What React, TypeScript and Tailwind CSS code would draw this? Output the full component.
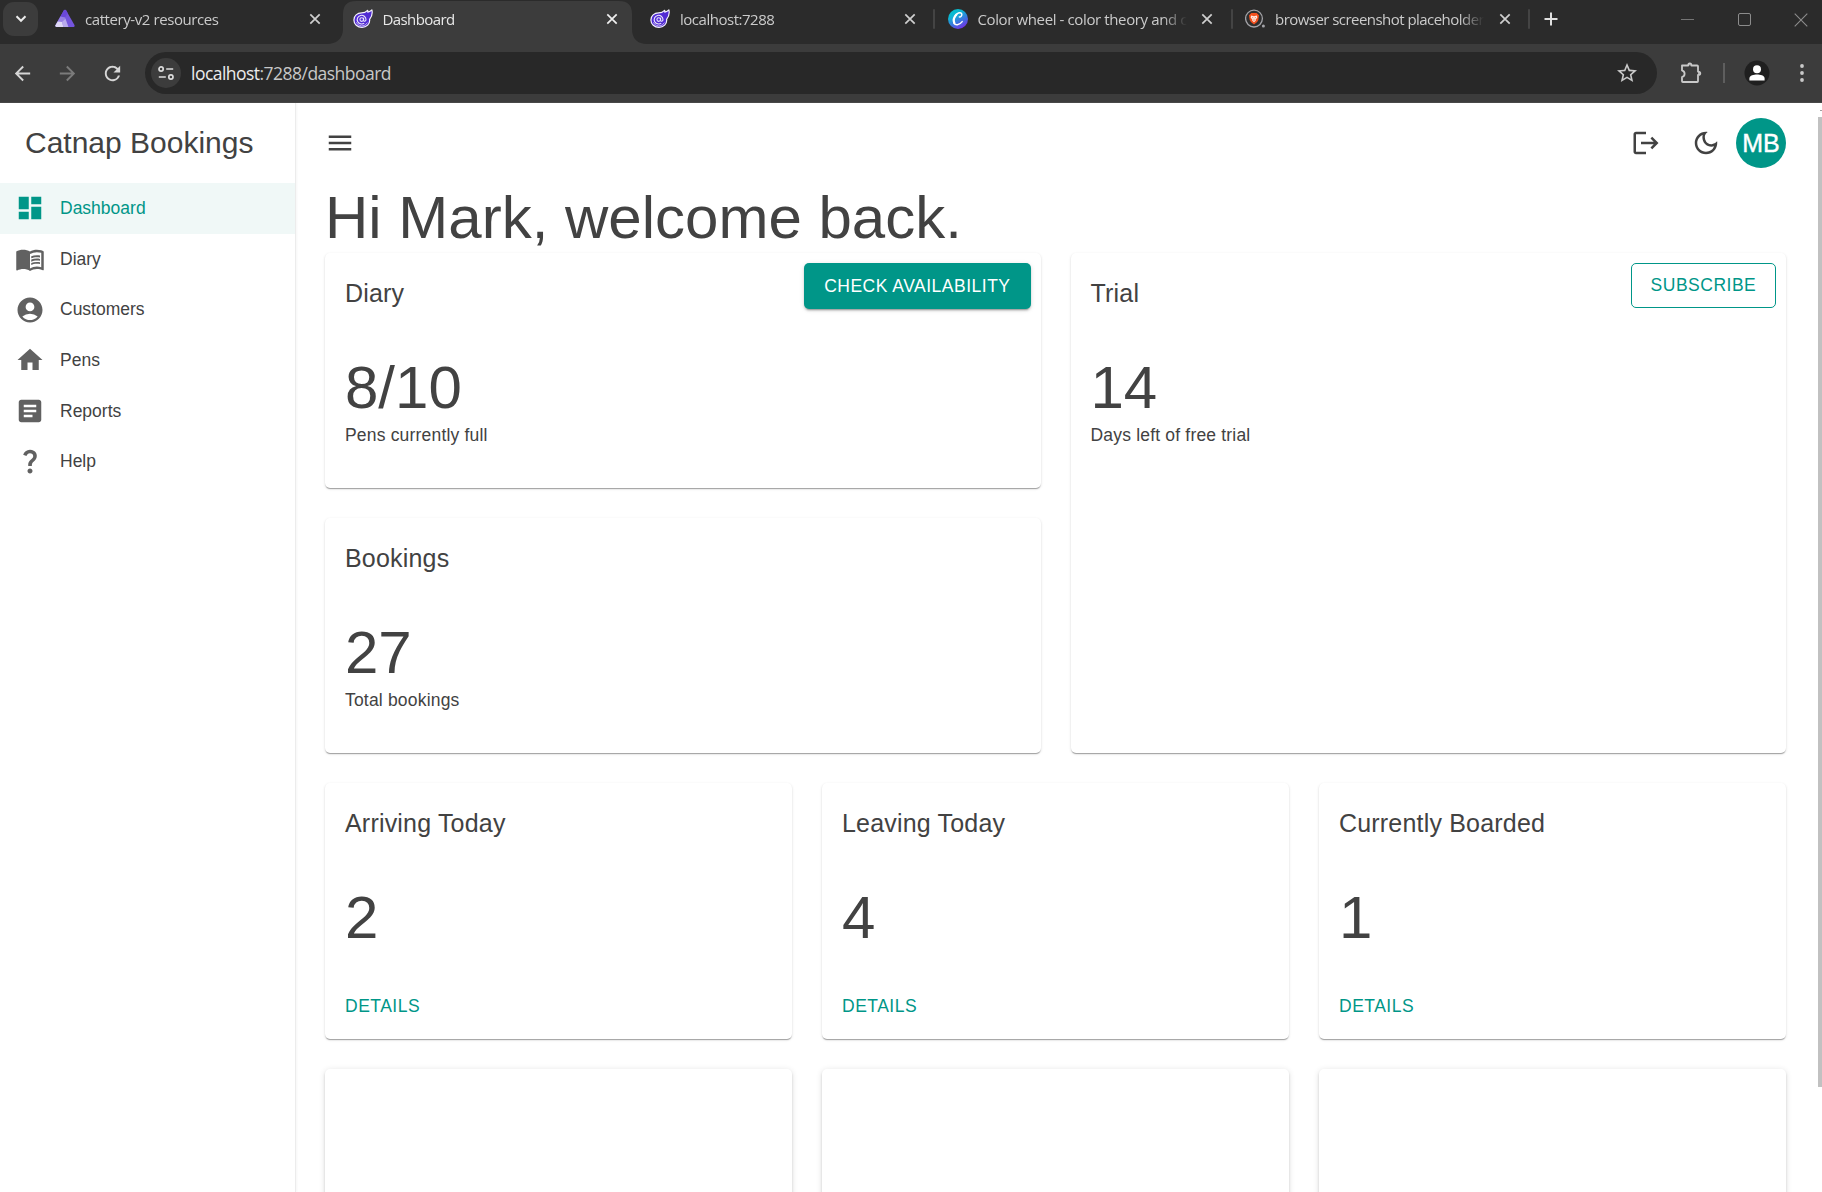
import type { ReactNode } from "react";
import {
  MdAccountCircle,
  MdArrowBack,
  MdArrowForward,
  MdArticle,
  MdDashboard,
  MdHome,
  MdLogout,
  MdMenu,
  MdMenuBook,
  MdOutlineDarkMode,
  MdQuestionMark,
  MdRefresh,
  MdStarBorder,
} from "react-icons/md";

function AspireIcon() {
  return (
    <svg width="20" height="20" viewBox="0 0 20 20">
      <path d="M10 .8 Q10.8 .8 11.2 1.5 L19.6 16.2 Q20 18 18.6 18 H1.4 Q0 18 .4 16.2 L8.8 1.5 Q9.2 .8 10 .8Z" fill="#7455dd" />
      <path d="M10 .8 Q9.2 .8 8.8 1.5 L5.4 7.6 L10.2 8.4 L12.6 4 L11.2 1.5 Q10.8 .8 10 .8Z" fill="#6a48da" />
      <path d="M5.4 7.6 L2.6 12.4 L8.4 18 H13.4 L10.2 8.4Z" fill="#9780e5" />
      <path d="M2.6 12.4 L.4 16.2 Q0 18 1.4 18 H8.4 L7 13Z" fill="#dfd8f7" />
      <path d="M7 13 L10.4 10 L13.4 18 H8.4Z" fill="#b9aaee" />
    </svg>
  );
}

function BlazorIcon() {
  return (
    <svg width="20" height="20" viewBox="0 0 20 20">
      <path
        d="M8.6 3.9 C11.4 3.8 13.2 2.9 14.6 1.3 C14.9 2 14.9 2.5 14.8 3.1 C16.6 2.6 18 1.7 18.9 .8 C19.7 4.6 18.9 7.8 16.6 10.4 C17.2 14.9 13.4 18.4 9 18.4 C4.4 18.4 .9 15.3 .9 11 C.9 6.8 4.2 4 8.6 3.9Z"
        fill="#512bd4"
        stroke="#f4f1fd"
        strokeWidth="1.2"
        strokeLinejoin="round"
      />
      <circle cx="8.7" cy="10.6" r="1.8" fill="none" stroke="#ece7fb" strokeWidth="1.1" />
      <path d="M10.6 8.7 V11.2 C10.7 12.9 13 12.6 13 10.5 A4.4 4.3 0 1 0 11.2 14.1" fill="none" stroke="#ece7fb" strokeWidth="1.1" />
      <path d="M14.4 13.6 A6.2 6.2 0 0 1 3.2 13.2" fill="none" stroke="#cfc4f4" strokeWidth=".8" />
    </svg>
  );
}

function CanvaIcon() {
  return (
    <svg width="20" height="20" viewBox="0 0 20 20">
      <defs>
        <linearGradient id="canva" x1=".2" y1="0" x2=".75" y2="1">
          <stop offset="0" stopColor="#00c4cc" />
          <stop offset=".3" stopColor="#0fb4d4" />
          <stop offset=".65" stopColor="#3f6fe0" />
          <stop offset="1" stopColor="#7d2ae8" />
        </linearGradient>
      </defs>
      <circle cx="10" cy="10" r="10" fill="url(#canva)" />
      <path
        d="M11.3 7.9 C12.6 8.3 14.2 6.6 13.8 5 C13.4 3.4 11 3.2 9 4.9 C6.2 7.2 4.9 11.6 6 14 C7.2 16.6 11.2 16.5 14.2 12.6"
        fill="none"
        stroke="#fff"
        strokeWidth="1.4"
        strokeLinecap="round"
      />
      <path d="M8.4 5.6 C6 8.2 5.2 11.8 6.4 14.2" fill="none" stroke="#fff" strokeWidth="2.2" strokeLinecap="round" />
    </svg>
  );
}

function BraveIcon() {
  return (
    <svg width="20" height="20" viewBox="0 0 20 20">
      <circle cx="9" cy="9.6" r="8.4" fill="#2e2e2e" stroke="#a3a3a8" strokeWidth="1.3" />
      <path d="M6.4 4 H11.6 L14 6.2 L13.3 11 Q12.7 13.4 9 15.4 Q5.3 13.4 4.7 11 L4 6.2Z" fill="#f4501e" />
      <path d="M6.2 6.6 L9 7.2 L11.8 6.6 L12.4 8.4 L10.6 10.8 L10.9 11.6 L9 13.2 L7.1 11.6 L7.4 10.8 L5.6 8.4Z" fill="#fff" fillOpacity=".88" />
      <path d="M7 8.4 L8.4 9 M11 8.4 L9.6 9 M8 10.8 L9 11.3 L10 10.8" fill="none" stroke="#f4501e" strokeWidth=".6" />
      <circle cx="18.4" cy="17" r="1.5" fill="#a3a3a8" />
    </svg>
  );
}

function CloseGlyph({ bright }: { bright?: boolean }) {
  return (
    <svg width="12" height="12" viewBox="0 0 12 12" className={bright ? "text-[#f0f0f0]" : "text-[#cfcfcf]"}>
      <path d="M1.3 1.3 L10.7 10.7 M10.7 1.3 L1.3 10.7" stroke="currentColor" strokeWidth="1.7" />
    </svg>
  );
}

type TabProps = { icon: ReactNode; title: string; titleClass: string; active?: boolean; divider?: boolean };

function Tab({ icon, title, titleClass, active, divider }: TabProps) {
  return (
    <div className="relative flex h-[44px] w-[297.5px] shrink-0">
      {active && (
        <div className="absolute top-[1px] left-[-15.5px] h-[43px] w-[320px]">
          <svg width="320" height="43" viewBox="0 0 320 43">
            <path d="M0 43 C9 43 16 38 16 28 V13 Q16 0 29 0 H292 Q305 0 305 13 V28 C305 38 311 43 320 43Z" fill="#3c3c3c" />
          </svg>
        </div>
      )}
      <div className="relative flex h-[38px] w-full items-center pl-[10px]">
        <span className="w-[20px] shrink-0">{icon}</span>
        <span
          className={`ml-[10px] w-[209px] shrink-0 overflow-hidden text-[15px] leading-[22px] whitespace-nowrap [mask-image:linear-gradient(to_right,black_185px,transparent_209px)] ${titleClass} ${active ? "text-[#e8e8e8]" : "text-[#cbcbcb]"}`}
        >
          {title}
        </span>
        <span className="ml-[14.5px]">
          <CloseGlyph bright={active} />
        </span>
      </div>
      {divider && <span className="absolute top-[9px] right-[2.5px] h-[20px] w-[2px] rounded bg-[#444444]" />}
    </div>
  );
}

function BrowserChrome() {
  return (
    <header className="h-[103px] shrink-0 bg-[#3c3c3c] font-['Open_Sans','Noto_Sans',sans-serif]">
      <div className="flex h-[44px] bg-[#2b2b2b]">
        <div className="flex w-[45px] shrink-0 pt-[2px] pl-[3px]">
          <div className="flex h-[34px] w-[35px] items-center justify-center rounded-[11px] bg-[#3c3c3c]">
            <svg width="12" height="8" viewBox="0 0 12 8">
              <path d="M1.5 1.3 L6 5.8 L10.5 1.3" fill="none" stroke="#ececec" strokeWidth="2" />
            </svg>
          </div>
        </div>
        <Tab icon={<AspireIcon />} title="cattery-v2 resources" titleClass="tracking-[-0.42px]" />
        <Tab icon={<BlazorIcon />} title="Dashboard" titleClass="tracking-[-0.6px]" active />
        <Tab icon={<BlazorIcon />} title="localhost:7288" titleClass="tracking-[-0.48px]" divider />
        <Tab icon={<CanvaIcon />} title="Color wheel - color theory and c" titleClass="tracking-[-0.38px]" divider />
        <Tab icon={<BraveIcon />} title="browser screenshot placeholder" titleClass="tracking-[-0.54px]" divider />
        <div className="flex h-[38px] flex-1 items-center pl-[11.5px]">
          <svg width="14" height="14" viewBox="0 0 14 14">
            <path d="M7 .5 V13.5 M.5 7 H13.5" stroke="#e0e0e0" strokeWidth="2" />
          </svg>
          <div className="flex flex-1 items-center justify-end gap-[43.5px] pt-[1px] pr-[14px]">
            <span className="h-px w-[13px] bg-[#757575]" />
            <span className="size-[13px] rounded-[2px] border border-[#8c8c8c]" />
            <svg width="14" height="14" viewBox="0 0 14 14">
              <path d="M.7 .7 L13.3 13.3 M13.3 .7 L.7 13.3" stroke="#8c8c8c" strokeWidth="1.1" />
            </svg>
          </div>
        </div>
      </div>
      <div className="flex h-[59px] items-center border-b border-[#484848]">
        <div className="flex w-[145px] shrink-0 items-center pl-[11px]">
          <MdArrowBack size={23} className="text-[#d6d6d6]" />
          <MdArrowForward size={23} className="ml-[22px] text-[#7b7b7b]" />
          <MdRefresh size={23} className="ml-[22px] text-[#d6d6d6]" />
        </div>
        <div className="flex h-[42px] w-[1512px] shrink-0 items-center rounded-full bg-[#282828] pr-[18px] pl-[6px]">
          <div className="flex size-[30px] items-center justify-center rounded-full bg-[#3c3c3c]">
            <svg width="16" height="16" viewBox="0 0 16 16" fill="none" stroke="#dcdcdc" strokeWidth="1.7">
              <circle cx="3.1" cy="4" r="2.1" />
              <path d="M8.2 4 H15.2 M.8 12 H7.8" />
              <circle cx="12.9" cy="12" r="2.1" />
            </svg>
          </div>
          <span className="ml-[10px] flex-1 text-[17.5px] leading-[24px] tracking-[-0.53px] text-[#c7c7c7]">
            <span className="text-[#ececec]">localhost</span>:7288/dashboard
          </span>
          <MdStarBorder size={24} className="text-[#c9c9c9]" />
        </div>
        <div className="flex flex-1 items-center pl-[23px]">
          <svg width="22" height="22" viewBox="0 0 22 22">
            <path
              d="M2 3.5 H8.2 Q8.2 1.3 9.8 1.3 Q11.4 1.3 11.4 3.5 H17.2 Q18 3.5 18 4.3 V9.6 Q20.3 9.6 20.3 11.3 Q20.3 13 18 13 V19.2 Q18 20 17.2 20 H2.8 Q2 20 2 19.2 V15.2 Q4.6 14.3 4.6 11.8 Q4.6 9.3 2 8.4Z"
              fill="none"
              stroke="#c9c9c9"
              strokeWidth="1.8"
              strokeLinejoin="round"
            />
            <path d="M8.4 3.2 A1.6 1.9 0 0 1 11.2 3.2Z M18.2 9.8 A2 1.6 0 0 1 18.2 12.8Z" fill="#c9c9c9" />
          </svg>
          <span className="ml-[21px] h-[20px] w-[2px] bg-[#5e5e5e]" />
          <svg width="26" height="26" viewBox="0 0 26 26" className="ml-[19px]">
            <circle cx="13" cy="13" r="12.5" fill="#1f1f1f" />
            <circle cx="13" cy="9.2" r="4" fill="#fff" />
            <path d="M5.4 20.4 V18.4 C5.4 15.6 10 14.6 13 14.6 S20.6 15.6 20.6 18.4 V20.4Z" fill="#fff" />
          </svg>
          <svg width="4" height="20" viewBox="0 0 4 20" className="ml-[30px]" fill="#c9c9c9">
            <circle cx="2" cy="3" r="1.9" />
            <circle cx="2" cy="10" r="1.9" />
            <circle cx="2" cy="17" r="1.9" />
          </svg>
        </div>
      </div>
    </header>
  );
}

const navItems = [
  { label: "Dashboard", Icon: MdDashboard, active: true },
  { label: "Diary", Icon: MdMenuBook },
  { label: "Customers", Icon: MdAccountCircle },
  { label: "Pens", Icon: MdHome },
  { label: "Reports", Icon: MdArticle },
  { label: "Help", Icon: MdQuestionMark },
];

function Sidebar() {
  return (
    <aside className="w-[296px] shrink-0 border-r border-[#ececec] bg-white shadow-[1px_0_2px_rgba(0,0,0,0.04)]">
      <div className="flex h-[80px] items-center pl-[25px] text-[30px] leading-[40px]">Catnap Bookings</div>
      <nav>
        {navItems.map(({ label, Icon, active }) => (
          <a
            key={label}
            className={`flex h-[50.63px] items-center pl-[15px] ${active ? "bg-[#f0f8f7] text-[#009688]" : "text-[#424242]"}`}
          >
            <Icon size={30} className={active ? "text-[#009688]" : "text-[#616161]"} />
            <span className="ml-[15px] pt-[0.5px] text-[17.5px] leading-[25px]">{label}</span>
          </a>
        ))}
      </nav>
    </aside>
  );
}

type CardProps = { title: string; value: string; caption?: string; action?: ReactNode; details?: boolean; className?: string };

function Card({ title, value, caption, action, details, className = "" }: CardProps) {
  return (
    <section
      className={`rounded-[5px] bg-white shadow-[0_2px_1px_-1px_rgba(0,0,0,0.2),0_1px_1px_0_rgba(0,0,0,0.14),0_1px_3px_0_rgba(0,0,0,0.12)] ${className}`}
    >
      <div className="flex h-[80px] items-start justify-between pt-[10px] pr-[10px] pl-[20px]">
        <h2 className="pt-[10px] text-[25px] leading-[40px] tracking-[0.1875px]">{title}</h2>
        {action}
      </div>
      <div className="px-[20px] pt-[20px]">
        <p className="text-[60px] leading-[70px]">{value}</p>
        {caption && <p className="text-[17.5px] leading-[25px] tracking-[0.1875px]">{caption}</p>}
      </div>
      {details && (
        <div className="px-[20px] pt-[38px]">
          <a className="text-[17.5px] leading-[30.6px] tracking-[0.5px] text-[#009688] uppercase">Details</a>
        </div>
      )}
    </section>
  );
}

function Placeholder() {
  return (
    <section className="h-[240px] rounded-[5px] bg-white shadow-[0_3.75px_1.25px_-2.5px_rgba(0,0,0,0.2),0_2.5px_2.5px_0_rgba(0,0,0,0.14),0_1.25px_6.25px_0_rgba(0,0,0,0.12)]" />
  );
}

function TopBar() {
  return (
    <div className="flex h-[80px] items-center">
      <MdMenu size={30} />
      <div className="ml-auto flex items-center">
        <MdLogout size={30} />
        <MdOutlineDarkMode size={30} className="ml-[30px]" />
        <span className="ml-[15px] flex size-[50px] items-center justify-center rounded-full bg-[#009688] pt-px text-[25px] text-white [-webkit-text-stroke:0.4px_white]">
          MB
        </span>
      </div>
    </div>
  );
}

export default function App() {
  return (
    <div className="flex h-[1192px] w-[1822px] flex-col overflow-hidden bg-white">
      <BrowserChrome />
      <div className="flex min-h-0 flex-1 font-['Liberation_Sans',Arial,sans-serif] text-[#424242]">
        <Sidebar />
        <main className="min-w-0 flex-1 overflow-hidden pr-[32px] pl-[29px]">
          <TopBar />
          <h1 className="text-[60px] leading-[70px]">Hi Mark, welcome back.</h1>
          <div className="grid grid-cols-6 gap-[30px]">
            <Card
              title="Diary"
              value="8/10"
              caption="Pens currently full"
              className="col-span-3 h-[235px]"
              action={
                <button className="h-[46px] rounded-[5px] bg-[#009688] px-[20px] text-[17.5px] tracking-[0.5px] text-white uppercase shadow-[0_3px_1px_-2px_rgba(0,0,0,0.2),0_2px_2px_0_rgba(0,0,0,0.14),0_1px_5px_0_rgba(0,0,0,0.12)]">
                  Check availability
                </button>
              }
            />
            <Card
              title="Trial"
              value="14"
              caption="Days left of free trial"
              className="col-span-3 row-span-2"
              action={
                <button className="h-[45px] rounded-[5px] border border-[#009688] px-[18.75px] text-[17.5px] tracking-[0.5px] text-[#009688] uppercase">
                  Subscribe
                </button>
              }
            />
            <Card title="Bookings" value="27" caption="Total bookings" className="col-span-3 h-[235px]" />
            <Card title="Arriving Today" value="2" details className="col-span-2 h-[256px]" />
            <Card title="Leaving Today" value="4" details className="col-span-2 h-[256px]" />
            <Card title="Currently Boarded" value="1" details className="col-span-2 h-[256px]" />
            <div className="col-span-2">
              <Placeholder />
            </div>
            <div className="col-span-2">
              <Placeholder />
            </div>
            <div className="col-span-2">
              <Placeholder />
            </div>
          </div>
        </main>
        <div className="w-[4px] shrink-0 pt-[7px]">
          <div className="ml-[2px] h-px w-[2px] bg-[#a0a0a0]" />
          <div className="mt-[6px] h-[970px] bg-[#c1c1c1]" />
        </div>
      </div>
    </div>
  );
}
